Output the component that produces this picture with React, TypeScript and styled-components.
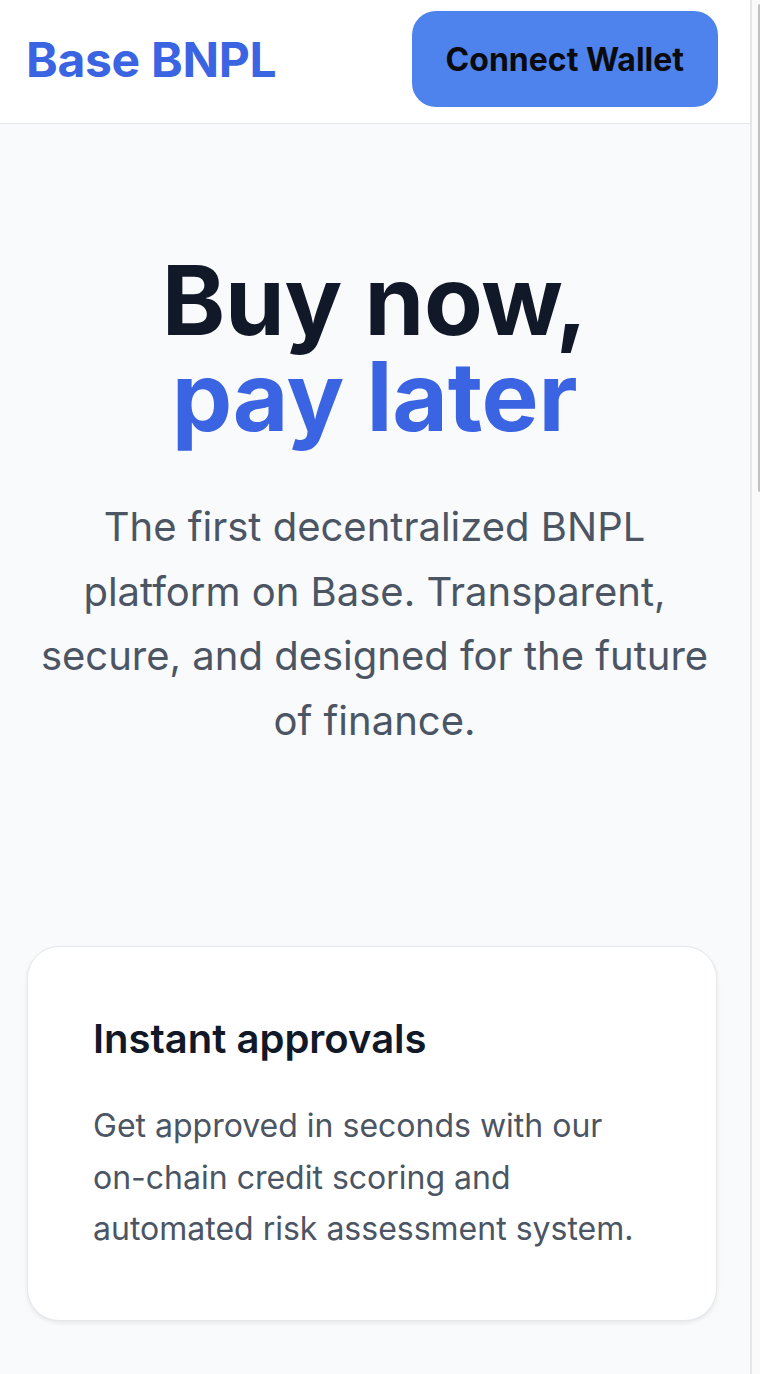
import styled, { createGlobalStyle } from 'styled-components'

const GlobalStyle = createGlobalStyle`
    html, body {
        margin: 0;
        padding: 0;
        background: #f9fafb;
    }

    body {
        font-family: Inter, "Liberation Sans", sans-serif;
        -webkit-font-smoothing: antialiased;
    }

    * {
        box-sizing: border-box;
    }
`

const Page = styled.div`
    margin-right: 10px;
`

// the browser scrollbar seen at the right edge of the screenshot
const ScrollTrack = styled.div`
    position: fixed;
    top: 0;
    right: 0;
    bottom: 0;
    width: 10px;
    background: #fafafa;
    border-left: 2px solid #e6e6e6;
`

const ScrollThumb = styled.div`
    position: absolute;
    top: 4px;
    right: 0;
    width: 2px;
    height: 488px;
    border-radius: 2px 0 0 2px;
    background: #c1c1c1;
`

const Header = styled.header`
    display: flex;
    align-items: center;
    justify-content: space-between;
    padding: 11px 32px 16px 26px;
    background: #ffffff;
    border-bottom: 1px solid #e5e7eb;
`

const Logo = styled.div`
    font-size: 48px;
    font-weight: 700;
    color: #3a64e2;
    letter-spacing: -0.3px;
`

const ConnectButton = styled.button`
    height: 96px;
    padding: 0 34px;
    border: none;
    border-radius: 24px;
    background: #4e82ed;
    color: #0b0b0f;
    font-family: Inter, "Liberation Sans", sans-serif;
    font-size: 32px;
    font-weight: 700;
    cursor: pointer;
`

const Hero = styled.section`
    display: flex;
    flex-direction: column;
    align-items: center;
    padding: 128px 28px 0 27px;
    text-align: center;
`

const Headline = styled.h1`
    margin: 0;
    font-size: 96px;
    line-height: 96px;
    font-weight: 700;
    color: #111827;
    letter-spacing: -0.3px;

    span{
        display: block;
        color: #3a64e2;
    }
`

const Lead = styled.p`
    margin: 51px 0 0;
    max-width: 680px;
    font-size: 40px;
    line-height: 64.5px;
    color: #4b5563;
`

const Features = styled.section`
    display: flex;
    flex-direction: column;
    gap: 64px;
    padding: 193px 33px 96px 27px;
`

const Card = styled.div`
    padding: 64px 64px 65px 65px;
    background: #ffffff;
    border: 1px solid #e5e7eb;
    border-radius: 32px;
    box-shadow: 0 2px 4px rgba(0, 0, 0, 0.08);
`

const CardTitle = styled.h3`
    margin: 0 0 33px;
    font-size: 40px;
    line-height: 56px;
    font-weight: 600;
    color: #111827;
`

const CardText = styled.p`
    margin: 0;
    font-size: 32px;
    line-height: 51.5px;
    color: #4b5563;
`

const Footer = styled.footer`
    padding: 64px 32px;
    border-top: 1px solid #e5e7eb;
    background: #ffffff;
    text-align: center;
    font-size: 28px;
    color: #6b7280;
`

const features = [
    {
        title: 'Instant approvals',
        text: 'Get approved in seconds with our on-chain credit scoring and automated risk assessment system.',
    },
    {
        title: 'Flexible payments',
        text: 'Split your purchases into interest-free installments that fit your budget and schedule.',
    },
    {
        title: 'Fully transparent',
        text: 'Every loan, repayment and fee is recorded on Base, so you always know exactly what you owe.',
    },
    {
        title: 'Secure by design',
        text: 'Audited smart contracts and non-custodial wallets keep your assets under your control.',
    },
]

const App = () => {
    return (
        <>
            <GlobalStyle />

            <Page>
                <Header>
                    <Logo>Base BNPL</Logo>
                    <ConnectButton>Connect Wallet</ConnectButton>
                </Header>

                <Hero>
                    <Headline>
                        Buy now,
                        <span>pay later</span>
                    </Headline>
                    <Lead>
                        The first decentralized BNPL platform on Base. Transparent, secure, and designed for the future of finance.
                    </Lead>
                </Hero>

                <Features>
                    { features.map((f) => (
                        <Card key={ f.title }>
                            <CardTitle>{ f.title }</CardTitle>
                            <CardText>{ f.text }</CardText>
                        </Card>
                    )) }
                </Features>

                <Footer>© 2024 Base BNPL. All rights reserved.</Footer>
            </Page>

            <ScrollTrack>
                <ScrollThumb />
            </ScrollTrack>
        </>
    )
}

export default App
